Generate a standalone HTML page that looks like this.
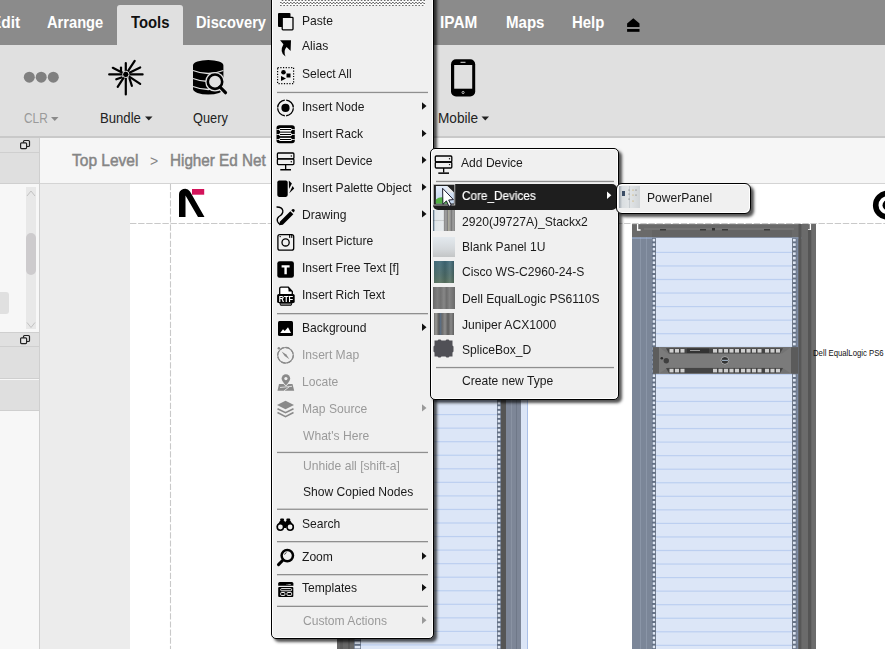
<!DOCTYPE html><html><head><meta charset="utf-8"><style>
*{margin:0;padding:0;box-sizing:border-box}
html,body{width:885px;height:649px;overflow:hidden;background:#fff}
body{position:relative;font-family:"Liberation Sans",sans-serif}
.g{will-change:transform}
.t{position:absolute;white-space:nowrap;line-height:1;font-family:"Liberation Sans",sans-serif}
svg{position:absolute;left:0;top:0;overflow:visible}
</style></head><body><div style="position:absolute;left:0px;top:0px;width:885px;height:45px;background:#8b8b8b"></div>
<div style="position:absolute;left:117px;top:5px;width:66px;height:40px;background:#e0e0e0;border-radius:3px 3px 0 0"></div>
<div class="t" style="left:-9.5px;top:14.0px;font-size:16.5px;color:#fff;font-weight:bold;transform:scaleX(0.9370);transform-origin:0 0;">Edit</div>
<div class="t" style="left:46.8px;top:14.0px;font-size:16.5px;color:#fff;font-weight:bold;transform:scaleX(0.8883);transform-origin:0 0;">Arrange</div>
<div class="t" style="left:130.5px;top:14.0px;font-size:16.5px;color:#111;font-weight:bold;transform:scaleX(0.9001);transform-origin:0 0;">Tools</div>
<div class="t" style="left:196px;top:14.0px;font-size:16.5px;color:#fff;font-weight:bold;transform:scaleX(0.8874);transform-origin:0 0;">Discovery</div>
<div class="t" style="left:440.4px;top:14.0px;font-size:16.5px;color:#fff;font-weight:bold;transform:scaleX(0.9319);transform-origin:0 0;">IPAM</div>
<div class="t" style="left:505.8px;top:14.0px;font-size:16.5px;color:#fff;font-weight:bold;transform:scaleX(0.9128);transform-origin:0 0;">Maps</div>
<div class="t" style="left:571.7px;top:14.0px;font-size:16.5px;color:#fff;font-weight:bold;transform:scaleX(0.9034);transform-origin:0 0;">Help</div>
<svg width="885" height="649"><path d="M627.1 23.4 L633.3 18.3 L639.5 23.4 V26.9 H627.1 Z" fill="#000"/><rect x="627.1" y="29" width="12.4" height="2.8" fill="#000"/></svg>
<div style="position:absolute;left:0px;top:45px;width:885px;height:92px;background:#e0e0e0"></div>
<div style="position:absolute;left:0px;top:136px;width:885px;height:1.5px;background:#c9c9c9"></div>
<div class="t" style="left:24.2px;top:110.8px;font-size:14.2px;color:#9a9a9a;font-weight:normal;transform:scaleX(0.8343);transform-origin:0 0;">CLR</div>
<div class="t" style="left:99.7px;top:110.7px;font-size:14.2px;color:#222;font-weight:normal;transform:scaleX(0.9250);transform-origin:0 0;">Bundle</div>
<div class="t" style="left:192.8px;top:110.7px;font-size:14.2px;color:#222;font-weight:normal;transform:scaleX(0.8999);transform-origin:0 0;">Query</div>
<div class="t" style="left:437.6px;top:110.7px;font-size:14.2px;color:#222;font-weight:normal;transform:scaleX(0.9610);transform-origin:0 0;">Mobile</div>
<svg width="885" height="649"><path d="M51 117 h7.5 l-3.75 4 z" fill="#8a8a8a"/><path d="M145 116.5 h7.5 l-3.75 4 z" fill="#222"/><path d="M481.5 116.5 h7.5 l-3.75 4 z" fill="#222"/><circle cx="29.3" cy="77.2" r="5.5" fill="#808080"/><circle cx="41.2" cy="77.2" r="5.5" fill="#808080"/><circle cx="53.3" cy="77.2" r="5.5" fill="#808080"/><line x1="125.8" y1="74.4" x2="125.8" y2="63" stroke="#000" stroke-width="2.2" stroke-linecap="round"/><line x1="125.8" y1="74.4" x2="125.8" y2="94.5" stroke="#000" stroke-width="2.2" stroke-linecap="round"/><line x1="125.8" y1="74.4" x2="109.2" y2="74.4" stroke="#000" stroke-width="2.2" stroke-linecap="round"/><line x1="125.8" y1="74.4" x2="142.6" y2="74.4" stroke="#000" stroke-width="2.2" stroke-linecap="round"/><line x1="125.8" y1="74.4" x2="134.7" y2="60.9" stroke="#000" stroke-width="2.2" stroke-linecap="round"/><line x1="125.8" y1="74.4" x2="112.8" y2="67.8" stroke="#000" stroke-width="2.2" stroke-linecap="round"/><line x1="125.8" y1="74.4" x2="140.2" y2="67.5" stroke="#000" stroke-width="2.2" stroke-linecap="round"/><line x1="125.8" y1="74.4" x2="140.2" y2="83.8" stroke="#000" stroke-width="2.2" stroke-linecap="round"/><line x1="125.8" y1="74.4" x2="117.7" y2="86.9" stroke="#000" stroke-width="2.2" stroke-linecap="round"/><line x1="121" y1="71" x2="121" y2="67.5" stroke="#000" stroke-width="2.2" stroke-linecap="round"/><line x1="121.5" y1="77.5" x2="116.3" y2="79.3" stroke="#000" stroke-width="2.2" stroke-linecap="round"/><line x1="129.5" y1="78.5" x2="131.9" y2="85.9" stroke="#000" stroke-width="2.2" stroke-linecap="round"/><circle cx="125.8" cy="74.4" r="3.2" fill="#000" stroke="#e0e0e0" stroke-width="1"/><path d="M193 65.5 a15.2 5.5 0 0 1 30.4 0 v23.5 a15.2 5.5 0 0 1 -30.4 0 z" fill="#000"/><path d="M193 70.5 q15.2 6 30.4 0" stroke="#e0e0e0" stroke-width="1.3" fill="none"/><path d="M193 78.5 q15.2 6 30.4 0" stroke="#e0e0e0" stroke-width="1.3" fill="none"/><path d="M193 86.5 q15.2 6 30.4 0" stroke="#e0e0e0" stroke-width="1.3" fill="none"/><circle cx="215" cy="81.7" r="9.8" fill="#e0e0e0"/><line x1="219" y1="86" x2="226" y2="93.2" stroke="#e0e0e0" stroke-width="5.5" stroke-linecap="round"/><circle cx="215" cy="81.7" r="7.2" fill="#e0e0e0" stroke="#000" stroke-width="2.6"/><line x1="220" y1="87" x2="225.5" y2="92.7" stroke="#000" stroke-width="3.2" stroke-linecap="round"/><rect x="451" y="59.3" width="24.2" height="37.2" rx="5" fill="#000"/><rect x="454.2" y="65" width="18" height="23.7" fill="#e0e0e0"/><circle cx="463.1" cy="92.5" r="1.1" fill="none" stroke="#e0e0e0" stroke-width="0.8"/><rect x="460.5" y="61.8" width="5" height="1" fill="#e0e0e0"/></svg>
<div style="position:absolute;left:0px;top:137.5px;width:39px;height:512px;background:#f7f7f7"></div>
<div style="position:absolute;left:0px;top:137.5px;width:39px;height:15px;background:#e0e0e0"></div>
<div style="position:absolute;left:0px;top:152px;width:39px;height:1.2px;background:#cfcfcf"></div>
<div style="position:absolute;left:0px;top:153px;width:39px;height:30px;background:#dfdfdf"></div>
<div style="position:absolute;left:0px;top:183px;width:39px;height:1.2px;background:#cfcfcf"></div>
<div style="position:absolute;left:26px;top:187px;width:10px;height:142px;background:#e8e8e8"></div>
<div style="position:absolute;left:26px;top:233px;width:10px;height:42px;background:#cdcbcd;border-radius:5px 5px 5px 5px"></div>
<div style="position:absolute;left:0px;top:291.5px;width:8.6px;height:22px;background:#e0e0e0;border-radius:0 3px 3px 0"></div>
<div style="position:absolute;left:0px;top:332px;width:39px;height:1.2px;background:#cfcfcf"></div>
<div style="position:absolute;left:0px;top:333px;width:39px;height:13.5px;background:#e0e0e0"></div>
<div style="position:absolute;left:0px;top:346px;width:39px;height:1.2px;background:#cfcfcf"></div>
<div style="position:absolute;left:0px;top:347px;width:39px;height:31.5px;background:#dfdfdf"></div>
<div style="position:absolute;left:0px;top:378.3px;width:39px;height:1.2px;background:#cfcfcf"></div>
<div style="position:absolute;left:0px;top:379.5px;width:39px;height:30px;background:#dfdfdf"></div>
<div style="position:absolute;left:0px;top:409.5px;width:39px;height:1.2px;background:#cfcfcf"></div>
<div style="position:absolute;left:38.8px;top:137.5px;width:1.5px;height:512px;background:#cfcfcf"></div>
<svg width="885" height="649"><path d="M27 196 L31 191 L35 196" stroke="#c2c2c2" stroke-width="1" fill="none"/><path d="M27 322.5 L31 327.5 L35 322.5" stroke="#c2c2c2" stroke-width="1" fill="none"/><rect x="23.5" y="140.5" width="6" height="6" rx="1" fill="none" stroke="#222" stroke-width="1.2"/><rect x="20.6" y="142.8" width="6" height="5.8" rx="1" fill="#e6e6e6" stroke="#222" stroke-width="1.2"/><rect x="23.5" y="335.5" width="6" height="6" rx="1" fill="none" stroke="#222" stroke-width="1.2"/><rect x="20.6" y="337.8" width="6" height="5.8" rx="1" fill="#e6e6e6" stroke="#222" stroke-width="1.2"/></svg>
<div style="position:absolute;left:40px;top:137.5px;width:845px;height:45.5px;background:#f6f6f6"></div>
<div style="position:absolute;left:40px;top:182.5px;width:845px;height:1.5px;background:#d4d4d4"></div>
<div class="t" style="left:71.6px;top:152.0px;font-size:16.5px;color:#858585;font-weight:normal;transform:scaleX(0.9401);transform-origin:0 0;-webkit-text-stroke:0.5px #858585;">Top Level</div>
<div class="t" style="left:150px;top:154.1px;font-size:14px;color:#858585;font-weight:normal;">&gt;</div>
<div class="t" style="left:169.8px;top:152.0px;font-size:16.5px;color:#858585;font-weight:normal;transform:scaleX(0.9235);transform-origin:0 0;-webkit-text-stroke:0.5px #858585;">Higher Ed Net</div>
<div style="position:absolute;left:40px;top:184px;width:90px;height:465px;background:#ececec"></div>
<svg width="885" height="649"><line x1="170.5" y1="184" x2="170.5" y2="649" stroke="#c9c9c9" stroke-width="1.1" stroke-dasharray="6.2 1.9"/><line x1="130" y1="223.5" x2="885" y2="223.5" stroke="#c9c9c9" stroke-width="1.1" stroke-dasharray="6.4 1.7"/><path d="M179 217 V195 a6 6 0 0 1 11 -3.5 L204.5 217 h-6.5 L185.5 195.5 V217 z" fill="#000"/><rect x="192" y="189" width="12.2" height="5.7" fill="#d3135a"/><circle cx="887.5" cy="205.2" r="11.8" fill="none" stroke="#000" stroke-width="5.6"/><circle cx="887.5" cy="205.2" r="5" fill="#000"/></svg>
<svg width="885" height="649"><rect x="337" y="184" width="191" height="465" fill="#686868"/><rect x="340" y="184" width="3" height="465" fill="#5e5e5e"/><rect x="348" y="184" width="2" height="465" fill="#5b5b5b"/><rect x="361" y="184" width="136" height="465" fill="#dce6f7"/><rect x="354" y="184" width="7" height="465" fill="#637085"/><rect x="354.7" y="184.80" width="5.6" height="2.6" fill="#dde5f2"/><rect x="354.7" y="189.32" width="5.6" height="2.6" fill="#dde5f2"/><rect x="354.7" y="193.84" width="5.6" height="2.6" fill="#dde5f2"/><rect x="354.7" y="198.36" width="5.6" height="2.6" fill="#dde5f2"/><rect x="354.7" y="202.88" width="5.6" height="2.6" fill="#dde5f2"/><rect x="354.7" y="207.40" width="5.6" height="2.6" fill="#dde5f2"/><rect x="354.7" y="211.92" width="5.6" height="2.6" fill="#dde5f2"/><rect x="354.7" y="216.44" width="5.6" height="2.6" fill="#dde5f2"/><rect x="354.7" y="220.96" width="5.6" height="2.6" fill="#dde5f2"/><rect x="354.7" y="225.48" width="5.6" height="2.6" fill="#dde5f2"/><rect x="354.7" y="230.00" width="5.6" height="2.6" fill="#dde5f2"/><rect x="354.7" y="234.52" width="5.6" height="2.6" fill="#dde5f2"/><rect x="354.7" y="239.04" width="5.6" height="2.6" fill="#dde5f2"/><rect x="354.7" y="243.56" width="5.6" height="2.6" fill="#dde5f2"/><rect x="354.7" y="248.08" width="5.6" height="2.6" fill="#dde5f2"/><rect x="354.7" y="252.60" width="5.6" height="2.6" fill="#dde5f2"/><rect x="354.7" y="257.12" width="5.6" height="2.6" fill="#dde5f2"/><rect x="354.7" y="261.64" width="5.6" height="2.6" fill="#dde5f2"/><rect x="354.7" y="266.16" width="5.6" height="2.6" fill="#dde5f2"/><rect x="354.7" y="270.68" width="5.6" height="2.6" fill="#dde5f2"/><rect x="354.7" y="275.20" width="5.6" height="2.6" fill="#dde5f2"/><rect x="354.7" y="279.72" width="5.6" height="2.6" fill="#dde5f2"/><rect x="354.7" y="284.24" width="5.6" height="2.6" fill="#dde5f2"/><rect x="354.7" y="288.76" width="5.6" height="2.6" fill="#dde5f2"/><rect x="354.7" y="293.28" width="5.6" height="2.6" fill="#dde5f2"/><rect x="354.7" y="297.80" width="5.6" height="2.6" fill="#dde5f2"/><rect x="354.7" y="302.32" width="5.6" height="2.6" fill="#dde5f2"/><rect x="354.7" y="306.84" width="5.6" height="2.6" fill="#dde5f2"/><rect x="354.7" y="311.36" width="5.6" height="2.6" fill="#dde5f2"/><rect x="354.7" y="315.88" width="5.6" height="2.6" fill="#dde5f2"/><rect x="354.7" y="320.40" width="5.6" height="2.6" fill="#dde5f2"/><rect x="354.7" y="324.92" width="5.6" height="2.6" fill="#dde5f2"/><rect x="354.7" y="329.44" width="5.6" height="2.6" fill="#dde5f2"/><rect x="354.7" y="333.96" width="5.6" height="2.6" fill="#dde5f2"/><rect x="354.7" y="338.48" width="5.6" height="2.6" fill="#dde5f2"/><rect x="354.7" y="343.00" width="5.6" height="2.6" fill="#dde5f2"/><rect x="354.7" y="347.52" width="5.6" height="2.6" fill="#dde5f2"/><rect x="354.7" y="352.04" width="5.6" height="2.6" fill="#dde5f2"/><rect x="354.7" y="356.56" width="5.6" height="2.6" fill="#dde5f2"/><rect x="354.7" y="361.08" width="5.6" height="2.6" fill="#dde5f2"/><rect x="354.7" y="365.60" width="5.6" height="2.6" fill="#dde5f2"/><rect x="354.7" y="370.12" width="5.6" height="2.6" fill="#dde5f2"/><rect x="354.7" y="374.64" width="5.6" height="2.6" fill="#dde5f2"/><rect x="354.7" y="379.16" width="5.6" height="2.6" fill="#dde5f2"/><rect x="354.7" y="383.68" width="5.6" height="2.6" fill="#dde5f2"/><rect x="354.7" y="388.20" width="5.6" height="2.6" fill="#dde5f2"/><rect x="354.7" y="392.72" width="5.6" height="2.6" fill="#dde5f2"/><rect x="354.7" y="397.24" width="5.6" height="2.6" fill="#dde5f2"/><rect x="354.7" y="401.76" width="5.6" height="2.6" fill="#dde5f2"/><rect x="354.7" y="406.28" width="5.6" height="2.6" fill="#dde5f2"/><rect x="354.7" y="410.80" width="5.6" height="2.6" fill="#dde5f2"/><rect x="354.7" y="415.32" width="5.6" height="2.6" fill="#dde5f2"/><rect x="354.7" y="419.84" width="5.6" height="2.6" fill="#dde5f2"/><rect x="354.7" y="424.36" width="5.6" height="2.6" fill="#dde5f2"/><rect x="354.7" y="428.88" width="5.6" height="2.6" fill="#dde5f2"/><rect x="354.7" y="433.40" width="5.6" height="2.6" fill="#dde5f2"/><rect x="354.7" y="437.92" width="5.6" height="2.6" fill="#dde5f2"/><rect x="354.7" y="442.44" width="5.6" height="2.6" fill="#dde5f2"/><rect x="354.7" y="446.96" width="5.6" height="2.6" fill="#dde5f2"/><rect x="354.7" y="451.48" width="5.6" height="2.6" fill="#dde5f2"/><rect x="354.7" y="456.00" width="5.6" height="2.6" fill="#dde5f2"/><rect x="354.7" y="460.52" width="5.6" height="2.6" fill="#dde5f2"/><rect x="354.7" y="465.04" width="5.6" height="2.6" fill="#dde5f2"/><rect x="354.7" y="469.56" width="5.6" height="2.6" fill="#dde5f2"/><rect x="354.7" y="474.08" width="5.6" height="2.6" fill="#dde5f2"/><rect x="354.7" y="478.60" width="5.6" height="2.6" fill="#dde5f2"/><rect x="354.7" y="483.12" width="5.6" height="2.6" fill="#dde5f2"/><rect x="354.7" y="487.64" width="5.6" height="2.6" fill="#dde5f2"/><rect x="354.7" y="492.16" width="5.6" height="2.6" fill="#dde5f2"/><rect x="354.7" y="496.68" width="5.6" height="2.6" fill="#dde5f2"/><rect x="354.7" y="501.20" width="5.6" height="2.6" fill="#dde5f2"/><rect x="354.7" y="505.72" width="5.6" height="2.6" fill="#dde5f2"/><rect x="354.7" y="510.24" width="5.6" height="2.6" fill="#dde5f2"/><rect x="354.7" y="514.76" width="5.6" height="2.6" fill="#dde5f2"/><rect x="354.7" y="519.28" width="5.6" height="2.6" fill="#dde5f2"/><rect x="354.7" y="523.80" width="5.6" height="2.6" fill="#dde5f2"/><rect x="354.7" y="528.32" width="5.6" height="2.6" fill="#dde5f2"/><rect x="354.7" y="532.84" width="5.6" height="2.6" fill="#dde5f2"/><rect x="354.7" y="537.36" width="5.6" height="2.6" fill="#dde5f2"/><rect x="354.7" y="541.88" width="5.6" height="2.6" fill="#dde5f2"/><rect x="354.7" y="546.40" width="5.6" height="2.6" fill="#dde5f2"/><rect x="354.7" y="550.92" width="5.6" height="2.6" fill="#dde5f2"/><rect x="354.7" y="555.44" width="5.6" height="2.6" fill="#dde5f2"/><rect x="354.7" y="559.96" width="5.6" height="2.6" fill="#dde5f2"/><rect x="354.7" y="564.48" width="5.6" height="2.6" fill="#dde5f2"/><rect x="354.7" y="569.00" width="5.6" height="2.6" fill="#dde5f2"/><rect x="354.7" y="573.52" width="5.6" height="2.6" fill="#dde5f2"/><rect x="354.7" y="578.04" width="5.6" height="2.6" fill="#dde5f2"/><rect x="354.7" y="582.56" width="5.6" height="2.6" fill="#dde5f2"/><rect x="354.7" y="587.08" width="5.6" height="2.6" fill="#dde5f2"/><rect x="354.7" y="591.60" width="5.6" height="2.6" fill="#dde5f2"/><rect x="354.7" y="596.12" width="5.6" height="2.6" fill="#dde5f2"/><rect x="354.7" y="600.64" width="5.6" height="2.6" fill="#dde5f2"/><rect x="354.7" y="605.16" width="5.6" height="2.6" fill="#dde5f2"/><rect x="354.7" y="609.68" width="5.6" height="2.6" fill="#dde5f2"/><rect x="354.7" y="614.20" width="5.6" height="2.6" fill="#dde5f2"/><rect x="354.7" y="618.72" width="5.6" height="2.6" fill="#dde5f2"/><rect x="354.7" y="623.24" width="5.6" height="2.6" fill="#dde5f2"/><rect x="354.7" y="627.76" width="5.6" height="2.6" fill="#dde5f2"/><rect x="354.7" y="632.28" width="5.6" height="2.6" fill="#dde5f2"/><rect x="354.7" y="636.80" width="5.6" height="2.6" fill="#dde5f2"/><rect x="354.7" y="641.32" width="5.6" height="2.6" fill="#dde5f2"/><rect x="354.7" y="645.84" width="5.6" height="2.6" fill="#dde5f2"/><rect x="497" y="184" width="4" height="465" fill="#637085"/><rect x="497.7" y="184.80" width="2.6" height="2.6" fill="#dde5f2"/><rect x="497.7" y="189.32" width="2.6" height="2.6" fill="#dde5f2"/><rect x="497.7" y="193.84" width="2.6" height="2.6" fill="#dde5f2"/><rect x="497.7" y="198.36" width="2.6" height="2.6" fill="#dde5f2"/><rect x="497.7" y="202.88" width="2.6" height="2.6" fill="#dde5f2"/><rect x="497.7" y="207.40" width="2.6" height="2.6" fill="#dde5f2"/><rect x="497.7" y="211.92" width="2.6" height="2.6" fill="#dde5f2"/><rect x="497.7" y="216.44" width="2.6" height="2.6" fill="#dde5f2"/><rect x="497.7" y="220.96" width="2.6" height="2.6" fill="#dde5f2"/><rect x="497.7" y="225.48" width="2.6" height="2.6" fill="#dde5f2"/><rect x="497.7" y="230.00" width="2.6" height="2.6" fill="#dde5f2"/><rect x="497.7" y="234.52" width="2.6" height="2.6" fill="#dde5f2"/><rect x="497.7" y="239.04" width="2.6" height="2.6" fill="#dde5f2"/><rect x="497.7" y="243.56" width="2.6" height="2.6" fill="#dde5f2"/><rect x="497.7" y="248.08" width="2.6" height="2.6" fill="#dde5f2"/><rect x="497.7" y="252.60" width="2.6" height="2.6" fill="#dde5f2"/><rect x="497.7" y="257.12" width="2.6" height="2.6" fill="#dde5f2"/><rect x="497.7" y="261.64" width="2.6" height="2.6" fill="#dde5f2"/><rect x="497.7" y="266.16" width="2.6" height="2.6" fill="#dde5f2"/><rect x="497.7" y="270.68" width="2.6" height="2.6" fill="#dde5f2"/><rect x="497.7" y="275.20" width="2.6" height="2.6" fill="#dde5f2"/><rect x="497.7" y="279.72" width="2.6" height="2.6" fill="#dde5f2"/><rect x="497.7" y="284.24" width="2.6" height="2.6" fill="#dde5f2"/><rect x="497.7" y="288.76" width="2.6" height="2.6" fill="#dde5f2"/><rect x="497.7" y="293.28" width="2.6" height="2.6" fill="#dde5f2"/><rect x="497.7" y="297.80" width="2.6" height="2.6" fill="#dde5f2"/><rect x="497.7" y="302.32" width="2.6" height="2.6" fill="#dde5f2"/><rect x="497.7" y="306.84" width="2.6" height="2.6" fill="#dde5f2"/><rect x="497.7" y="311.36" width="2.6" height="2.6" fill="#dde5f2"/><rect x="497.7" y="315.88" width="2.6" height="2.6" fill="#dde5f2"/><rect x="497.7" y="320.40" width="2.6" height="2.6" fill="#dde5f2"/><rect x="497.7" y="324.92" width="2.6" height="2.6" fill="#dde5f2"/><rect x="497.7" y="329.44" width="2.6" height="2.6" fill="#dde5f2"/><rect x="497.7" y="333.96" width="2.6" height="2.6" fill="#dde5f2"/><rect x="497.7" y="338.48" width="2.6" height="2.6" fill="#dde5f2"/><rect x="497.7" y="343.00" width="2.6" height="2.6" fill="#dde5f2"/><rect x="497.7" y="347.52" width="2.6" height="2.6" fill="#dde5f2"/><rect x="497.7" y="352.04" width="2.6" height="2.6" fill="#dde5f2"/><rect x="497.7" y="356.56" width="2.6" height="2.6" fill="#dde5f2"/><rect x="497.7" y="361.08" width="2.6" height="2.6" fill="#dde5f2"/><rect x="497.7" y="365.60" width="2.6" height="2.6" fill="#dde5f2"/><rect x="497.7" y="370.12" width="2.6" height="2.6" fill="#dde5f2"/><rect x="497.7" y="374.64" width="2.6" height="2.6" fill="#dde5f2"/><rect x="497.7" y="379.16" width="2.6" height="2.6" fill="#dde5f2"/><rect x="497.7" y="383.68" width="2.6" height="2.6" fill="#dde5f2"/><rect x="497.7" y="388.20" width="2.6" height="2.6" fill="#dde5f2"/><rect x="497.7" y="392.72" width="2.6" height="2.6" fill="#dde5f2"/><rect x="497.7" y="397.24" width="2.6" height="2.6" fill="#dde5f2"/><rect x="497.7" y="401.76" width="2.6" height="2.6" fill="#dde5f2"/><rect x="497.7" y="406.28" width="2.6" height="2.6" fill="#dde5f2"/><rect x="497.7" y="410.80" width="2.6" height="2.6" fill="#dde5f2"/><rect x="497.7" y="415.32" width="2.6" height="2.6" fill="#dde5f2"/><rect x="497.7" y="419.84" width="2.6" height="2.6" fill="#dde5f2"/><rect x="497.7" y="424.36" width="2.6" height="2.6" fill="#dde5f2"/><rect x="497.7" y="428.88" width="2.6" height="2.6" fill="#dde5f2"/><rect x="497.7" y="433.40" width="2.6" height="2.6" fill="#dde5f2"/><rect x="497.7" y="437.92" width="2.6" height="2.6" fill="#dde5f2"/><rect x="497.7" y="442.44" width="2.6" height="2.6" fill="#dde5f2"/><rect x="497.7" y="446.96" width="2.6" height="2.6" fill="#dde5f2"/><rect x="497.7" y="451.48" width="2.6" height="2.6" fill="#dde5f2"/><rect x="497.7" y="456.00" width="2.6" height="2.6" fill="#dde5f2"/><rect x="497.7" y="460.52" width="2.6" height="2.6" fill="#dde5f2"/><rect x="497.7" y="465.04" width="2.6" height="2.6" fill="#dde5f2"/><rect x="497.7" y="469.56" width="2.6" height="2.6" fill="#dde5f2"/><rect x="497.7" y="474.08" width="2.6" height="2.6" fill="#dde5f2"/><rect x="497.7" y="478.60" width="2.6" height="2.6" fill="#dde5f2"/><rect x="497.7" y="483.12" width="2.6" height="2.6" fill="#dde5f2"/><rect x="497.7" y="487.64" width="2.6" height="2.6" fill="#dde5f2"/><rect x="497.7" y="492.16" width="2.6" height="2.6" fill="#dde5f2"/><rect x="497.7" y="496.68" width="2.6" height="2.6" fill="#dde5f2"/><rect x="497.7" y="501.20" width="2.6" height="2.6" fill="#dde5f2"/><rect x="497.7" y="505.72" width="2.6" height="2.6" fill="#dde5f2"/><rect x="497.7" y="510.24" width="2.6" height="2.6" fill="#dde5f2"/><rect x="497.7" y="514.76" width="2.6" height="2.6" fill="#dde5f2"/><rect x="497.7" y="519.28" width="2.6" height="2.6" fill="#dde5f2"/><rect x="497.7" y="523.80" width="2.6" height="2.6" fill="#dde5f2"/><rect x="497.7" y="528.32" width="2.6" height="2.6" fill="#dde5f2"/><rect x="497.7" y="532.84" width="2.6" height="2.6" fill="#dde5f2"/><rect x="497.7" y="537.36" width="2.6" height="2.6" fill="#dde5f2"/><rect x="497.7" y="541.88" width="2.6" height="2.6" fill="#dde5f2"/><rect x="497.7" y="546.40" width="2.6" height="2.6" fill="#dde5f2"/><rect x="497.7" y="550.92" width="2.6" height="2.6" fill="#dde5f2"/><rect x="497.7" y="555.44" width="2.6" height="2.6" fill="#dde5f2"/><rect x="497.7" y="559.96" width="2.6" height="2.6" fill="#dde5f2"/><rect x="497.7" y="564.48" width="2.6" height="2.6" fill="#dde5f2"/><rect x="497.7" y="569.00" width="2.6" height="2.6" fill="#dde5f2"/><rect x="497.7" y="573.52" width="2.6" height="2.6" fill="#dde5f2"/><rect x="497.7" y="578.04" width="2.6" height="2.6" fill="#dde5f2"/><rect x="497.7" y="582.56" width="2.6" height="2.6" fill="#dde5f2"/><rect x="497.7" y="587.08" width="2.6" height="2.6" fill="#dde5f2"/><rect x="497.7" y="591.60" width="2.6" height="2.6" fill="#dde5f2"/><rect x="497.7" y="596.12" width="2.6" height="2.6" fill="#dde5f2"/><rect x="497.7" y="600.64" width="2.6" height="2.6" fill="#dde5f2"/><rect x="497.7" y="605.16" width="2.6" height="2.6" fill="#dde5f2"/><rect x="497.7" y="609.68" width="2.6" height="2.6" fill="#dde5f2"/><rect x="497.7" y="614.20" width="2.6" height="2.6" fill="#dde5f2"/><rect x="497.7" y="618.72" width="2.6" height="2.6" fill="#dde5f2"/><rect x="497.7" y="623.24" width="2.6" height="2.6" fill="#dde5f2"/><rect x="497.7" y="627.76" width="2.6" height="2.6" fill="#dde5f2"/><rect x="497.7" y="632.28" width="2.6" height="2.6" fill="#dde5f2"/><rect x="497.7" y="636.80" width="2.6" height="2.6" fill="#dde5f2"/><rect x="497.7" y="641.32" width="2.6" height="2.6" fill="#dde5f2"/><rect x="497.7" y="645.84" width="2.6" height="2.6" fill="#dde5f2"/><rect x="501" y="184" width="5" height="465" fill="#555"/><rect x="506" y="184" width="15" height="465" fill="#7d8697"/><rect x="511" y="184" width="1" height="465" fill="#8a93a3"/><rect x="516" y="184" width="1" height="465" fill="#6f7888"/><rect x="521" y="184" width="6.5" height="465" fill="#dbe5f6"/><rect x="527" y="184" width="1" height="465" fill="#aac0e8"/><rect x="361" y="183.65" width="136" height="1.2" fill="#bccff0"/><rect x="361" y="197.20" width="136" height="1.2" fill="#bccff0"/><rect x="361" y="210.75" width="136" height="1.2" fill="#bccff0"/><rect x="361" y="224.30" width="136" height="1.2" fill="#bccff0"/><rect x="361" y="237.85" width="136" height="1.2" fill="#bccff0"/><rect x="361" y="251.40" width="136" height="1.2" fill="#bccff0"/><rect x="361" y="264.95" width="136" height="1.2" fill="#bccff0"/><rect x="361" y="278.50" width="136" height="1.2" fill="#bccff0"/><rect x="361" y="292.05" width="136" height="1.2" fill="#bccff0"/><rect x="361" y="305.60" width="136" height="1.2" fill="#bccff0"/><rect x="361" y="319.15" width="136" height="1.2" fill="#bccff0"/><rect x="361" y="332.70" width="136" height="1.2" fill="#bccff0"/><rect x="361" y="346.25" width="136" height="1.2" fill="#bccff0"/><rect x="361" y="359.80" width="136" height="1.2" fill="#bccff0"/><rect x="361" y="373.35" width="136" height="1.2" fill="#bccff0"/><rect x="361" y="386.90" width="136" height="1.2" fill="#bccff0"/><rect x="361" y="400.45" width="136" height="1.2" fill="#bccff0"/><rect x="361" y="414.00" width="136" height="1.2" fill="#bccff0"/><rect x="361" y="427.55" width="136" height="1.2" fill="#bccff0"/><rect x="361" y="441.10" width="136" height="1.2" fill="#bccff0"/><rect x="361" y="454.65" width="136" height="1.2" fill="#bccff0"/><rect x="361" y="468.20" width="136" height="1.2" fill="#bccff0"/><rect x="361" y="481.75" width="136" height="1.2" fill="#bccff0"/><rect x="361" y="495.30" width="136" height="1.2" fill="#bccff0"/><rect x="361" y="508.85" width="136" height="1.2" fill="#bccff0"/><rect x="361" y="522.40" width="136" height="1.2" fill="#bccff0"/><rect x="361" y="535.95" width="136" height="1.2" fill="#bccff0"/><rect x="361" y="549.50" width="136" height="1.2" fill="#bccff0"/><rect x="361" y="563.05" width="136" height="1.2" fill="#bccff0"/><rect x="361" y="576.60" width="136" height="1.2" fill="#bccff0"/><rect x="361" y="590.15" width="136" height="1.2" fill="#bccff0"/><rect x="361" y="603.70" width="136" height="1.2" fill="#bccff0"/><rect x="361" y="617.25" width="136" height="1.2" fill="#bccff0"/><rect x="361" y="630.80" width="136" height="1.2" fill="#bccff0"/><rect x="361" y="644.35" width="136" height="1.2" fill="#bccff0"/><rect x="632" y="224" width="184" height="425" fill="#6a6a6a"/><rect x="632" y="224" width="184" height="1" fill="#7a7a7a"/><rect x="644" y="228.5" width="150" height="1" fill="#7d7d7d"/><rect x="652" y="230" width="140" height="7.5" fill="#646464"/><rect x="660" y="229" width="6" height="1.5" fill="#3a3a3a"/><rect x="700" y="229" width="6" height="1.5" fill="#3a3a3a"/><rect x="712" y="228" width="3" height="2.5" fill="#333"/><rect x="722" y="229" width="6" height="1.5" fill="#3a3a3a"/><rect x="764" y="229" width="6" height="1.5" fill="#3a3a3a"/><path d="M637.6 224 v6 h3" fill="none" stroke="#fff" stroke-width="1.3"/><path d="M810.4 224 v6 h-3" fill="none" stroke="#fff" stroke-width="1.3"/><rect x="632" y="237.5" width="20" height="411.5" fill="#7b8698"/><rect x="640" y="237.5" width="1" height="411.5" fill="#8a95a7"/><rect x="646" y="237.5" width="1" height="411.5" fill="#8a95a7"/><rect x="632" y="237.5" width="170" height="1" fill="#9fb5dc"/><rect x="655.8" y="238" width="136.5" height="411" fill="#dce6f7"/><rect x="652" y="238" width="3.8" height="411" fill="#637085"/><rect x="652.7" y="238.80" width="2.4" height="2.6" fill="#dde5f2"/><rect x="652.7" y="243.32" width="2.4" height="2.6" fill="#dde5f2"/><rect x="652.7" y="247.84" width="2.4" height="2.6" fill="#dde5f2"/><rect x="652.7" y="252.36" width="2.4" height="2.6" fill="#dde5f2"/><rect x="652.7" y="256.88" width="2.4" height="2.6" fill="#dde5f2"/><rect x="652.7" y="261.40" width="2.4" height="2.6" fill="#dde5f2"/><rect x="652.7" y="265.92" width="2.4" height="2.6" fill="#dde5f2"/><rect x="652.7" y="270.44" width="2.4" height="2.6" fill="#dde5f2"/><rect x="652.7" y="274.96" width="2.4" height="2.6" fill="#dde5f2"/><rect x="652.7" y="279.48" width="2.4" height="2.6" fill="#dde5f2"/><rect x="652.7" y="284.00" width="2.4" height="2.6" fill="#dde5f2"/><rect x="652.7" y="288.52" width="2.4" height="2.6" fill="#dde5f2"/><rect x="652.7" y="293.04" width="2.4" height="2.6" fill="#dde5f2"/><rect x="652.7" y="297.56" width="2.4" height="2.6" fill="#dde5f2"/><rect x="652.7" y="302.08" width="2.4" height="2.6" fill="#dde5f2"/><rect x="652.7" y="306.60" width="2.4" height="2.6" fill="#dde5f2"/><rect x="652.7" y="311.12" width="2.4" height="2.6" fill="#dde5f2"/><rect x="652.7" y="315.64" width="2.4" height="2.6" fill="#dde5f2"/><rect x="652.7" y="320.16" width="2.4" height="2.6" fill="#dde5f2"/><rect x="652.7" y="324.68" width="2.4" height="2.6" fill="#dde5f2"/><rect x="652.7" y="329.20" width="2.4" height="2.6" fill="#dde5f2"/><rect x="652.7" y="333.72" width="2.4" height="2.6" fill="#dde5f2"/><rect x="652.7" y="338.24" width="2.4" height="2.6" fill="#dde5f2"/><rect x="652.7" y="342.76" width="2.4" height="2.6" fill="#dde5f2"/><rect x="652.7" y="347.28" width="2.4" height="2.6" fill="#dde5f2"/><rect x="652.7" y="351.80" width="2.4" height="2.6" fill="#dde5f2"/><rect x="652.7" y="356.32" width="2.4" height="2.6" fill="#dde5f2"/><rect x="652.7" y="360.84" width="2.4" height="2.6" fill="#dde5f2"/><rect x="652.7" y="365.36" width="2.4" height="2.6" fill="#dde5f2"/><rect x="652.7" y="369.88" width="2.4" height="2.6" fill="#dde5f2"/><rect x="652.7" y="374.40" width="2.4" height="2.6" fill="#dde5f2"/><rect x="652.7" y="378.92" width="2.4" height="2.6" fill="#dde5f2"/><rect x="652.7" y="383.44" width="2.4" height="2.6" fill="#dde5f2"/><rect x="652.7" y="387.96" width="2.4" height="2.6" fill="#dde5f2"/><rect x="652.7" y="392.48" width="2.4" height="2.6" fill="#dde5f2"/><rect x="652.7" y="397.00" width="2.4" height="2.6" fill="#dde5f2"/><rect x="652.7" y="401.52" width="2.4" height="2.6" fill="#dde5f2"/><rect x="652.7" y="406.04" width="2.4" height="2.6" fill="#dde5f2"/><rect x="652.7" y="410.56" width="2.4" height="2.6" fill="#dde5f2"/><rect x="652.7" y="415.08" width="2.4" height="2.6" fill="#dde5f2"/><rect x="652.7" y="419.60" width="2.4" height="2.6" fill="#dde5f2"/><rect x="652.7" y="424.12" width="2.4" height="2.6" fill="#dde5f2"/><rect x="652.7" y="428.64" width="2.4" height="2.6" fill="#dde5f2"/><rect x="652.7" y="433.16" width="2.4" height="2.6" fill="#dde5f2"/><rect x="652.7" y="437.68" width="2.4" height="2.6" fill="#dde5f2"/><rect x="652.7" y="442.20" width="2.4" height="2.6" fill="#dde5f2"/><rect x="652.7" y="446.72" width="2.4" height="2.6" fill="#dde5f2"/><rect x="652.7" y="451.24" width="2.4" height="2.6" fill="#dde5f2"/><rect x="652.7" y="455.76" width="2.4" height="2.6" fill="#dde5f2"/><rect x="652.7" y="460.28" width="2.4" height="2.6" fill="#dde5f2"/><rect x="652.7" y="464.80" width="2.4" height="2.6" fill="#dde5f2"/><rect x="652.7" y="469.32" width="2.4" height="2.6" fill="#dde5f2"/><rect x="652.7" y="473.84" width="2.4" height="2.6" fill="#dde5f2"/><rect x="652.7" y="478.36" width="2.4" height="2.6" fill="#dde5f2"/><rect x="652.7" y="482.88" width="2.4" height="2.6" fill="#dde5f2"/><rect x="652.7" y="487.40" width="2.4" height="2.6" fill="#dde5f2"/><rect x="652.7" y="491.92" width="2.4" height="2.6" fill="#dde5f2"/><rect x="652.7" y="496.44" width="2.4" height="2.6" fill="#dde5f2"/><rect x="652.7" y="500.96" width="2.4" height="2.6" fill="#dde5f2"/><rect x="652.7" y="505.48" width="2.4" height="2.6" fill="#dde5f2"/><rect x="652.7" y="510.00" width="2.4" height="2.6" fill="#dde5f2"/><rect x="652.7" y="514.52" width="2.4" height="2.6" fill="#dde5f2"/><rect x="652.7" y="519.04" width="2.4" height="2.6" fill="#dde5f2"/><rect x="652.7" y="523.56" width="2.4" height="2.6" fill="#dde5f2"/><rect x="652.7" y="528.08" width="2.4" height="2.6" fill="#dde5f2"/><rect x="652.7" y="532.60" width="2.4" height="2.6" fill="#dde5f2"/><rect x="652.7" y="537.12" width="2.4" height="2.6" fill="#dde5f2"/><rect x="652.7" y="541.64" width="2.4" height="2.6" fill="#dde5f2"/><rect x="652.7" y="546.16" width="2.4" height="2.6" fill="#dde5f2"/><rect x="652.7" y="550.68" width="2.4" height="2.6" fill="#dde5f2"/><rect x="652.7" y="555.20" width="2.4" height="2.6" fill="#dde5f2"/><rect x="652.7" y="559.72" width="2.4" height="2.6" fill="#dde5f2"/><rect x="652.7" y="564.24" width="2.4" height="2.6" fill="#dde5f2"/><rect x="652.7" y="568.76" width="2.4" height="2.6" fill="#dde5f2"/><rect x="652.7" y="573.28" width="2.4" height="2.6" fill="#dde5f2"/><rect x="652.7" y="577.80" width="2.4" height="2.6" fill="#dde5f2"/><rect x="652.7" y="582.32" width="2.4" height="2.6" fill="#dde5f2"/><rect x="652.7" y="586.84" width="2.4" height="2.6" fill="#dde5f2"/><rect x="652.7" y="591.36" width="2.4" height="2.6" fill="#dde5f2"/><rect x="652.7" y="595.88" width="2.4" height="2.6" fill="#dde5f2"/><rect x="652.7" y="600.40" width="2.4" height="2.6" fill="#dde5f2"/><rect x="652.7" y="604.92" width="2.4" height="2.6" fill="#dde5f2"/><rect x="652.7" y="609.44" width="2.4" height="2.6" fill="#dde5f2"/><rect x="652.7" y="613.96" width="2.4" height="2.6" fill="#dde5f2"/><rect x="652.7" y="618.48" width="2.4" height="2.6" fill="#dde5f2"/><rect x="652.7" y="623.00" width="2.4" height="2.6" fill="#dde5f2"/><rect x="652.7" y="627.52" width="2.4" height="2.6" fill="#dde5f2"/><rect x="652.7" y="632.04" width="2.4" height="2.6" fill="#dde5f2"/><rect x="652.7" y="636.56" width="2.4" height="2.6" fill="#dde5f2"/><rect x="652.7" y="641.08" width="2.4" height="2.6" fill="#dde5f2"/><rect x="652.7" y="645.60" width="2.4" height="2.6" fill="#dde5f2"/><rect x="792.3" y="238" width="4.1" height="411" fill="#637085"/><rect x="793.0" y="238.80" width="2.6999999999999997" height="2.6" fill="#dde5f2"/><rect x="793.0" y="243.32" width="2.6999999999999997" height="2.6" fill="#dde5f2"/><rect x="793.0" y="247.84" width="2.6999999999999997" height="2.6" fill="#dde5f2"/><rect x="793.0" y="252.36" width="2.6999999999999997" height="2.6" fill="#dde5f2"/><rect x="793.0" y="256.88" width="2.6999999999999997" height="2.6" fill="#dde5f2"/><rect x="793.0" y="261.40" width="2.6999999999999997" height="2.6" fill="#dde5f2"/><rect x="793.0" y="265.92" width="2.6999999999999997" height="2.6" fill="#dde5f2"/><rect x="793.0" y="270.44" width="2.6999999999999997" height="2.6" fill="#dde5f2"/><rect x="793.0" y="274.96" width="2.6999999999999997" height="2.6" fill="#dde5f2"/><rect x="793.0" y="279.48" width="2.6999999999999997" height="2.6" fill="#dde5f2"/><rect x="793.0" y="284.00" width="2.6999999999999997" height="2.6" fill="#dde5f2"/><rect x="793.0" y="288.52" width="2.6999999999999997" height="2.6" fill="#dde5f2"/><rect x="793.0" y="293.04" width="2.6999999999999997" height="2.6" fill="#dde5f2"/><rect x="793.0" y="297.56" width="2.6999999999999997" height="2.6" fill="#dde5f2"/><rect x="793.0" y="302.08" width="2.6999999999999997" height="2.6" fill="#dde5f2"/><rect x="793.0" y="306.60" width="2.6999999999999997" height="2.6" fill="#dde5f2"/><rect x="793.0" y="311.12" width="2.6999999999999997" height="2.6" fill="#dde5f2"/><rect x="793.0" y="315.64" width="2.6999999999999997" height="2.6" fill="#dde5f2"/><rect x="793.0" y="320.16" width="2.6999999999999997" height="2.6" fill="#dde5f2"/><rect x="793.0" y="324.68" width="2.6999999999999997" height="2.6" fill="#dde5f2"/><rect x="793.0" y="329.20" width="2.6999999999999997" height="2.6" fill="#dde5f2"/><rect x="793.0" y="333.72" width="2.6999999999999997" height="2.6" fill="#dde5f2"/><rect x="793.0" y="338.24" width="2.6999999999999997" height="2.6" fill="#dde5f2"/><rect x="793.0" y="342.76" width="2.6999999999999997" height="2.6" fill="#dde5f2"/><rect x="793.0" y="347.28" width="2.6999999999999997" height="2.6" fill="#dde5f2"/><rect x="793.0" y="351.80" width="2.6999999999999997" height="2.6" fill="#dde5f2"/><rect x="793.0" y="356.32" width="2.6999999999999997" height="2.6" fill="#dde5f2"/><rect x="793.0" y="360.84" width="2.6999999999999997" height="2.6" fill="#dde5f2"/><rect x="793.0" y="365.36" width="2.6999999999999997" height="2.6" fill="#dde5f2"/><rect x="793.0" y="369.88" width="2.6999999999999997" height="2.6" fill="#dde5f2"/><rect x="793.0" y="374.40" width="2.6999999999999997" height="2.6" fill="#dde5f2"/><rect x="793.0" y="378.92" width="2.6999999999999997" height="2.6" fill="#dde5f2"/><rect x="793.0" y="383.44" width="2.6999999999999997" height="2.6" fill="#dde5f2"/><rect x="793.0" y="387.96" width="2.6999999999999997" height="2.6" fill="#dde5f2"/><rect x="793.0" y="392.48" width="2.6999999999999997" height="2.6" fill="#dde5f2"/><rect x="793.0" y="397.00" width="2.6999999999999997" height="2.6" fill="#dde5f2"/><rect x="793.0" y="401.52" width="2.6999999999999997" height="2.6" fill="#dde5f2"/><rect x="793.0" y="406.04" width="2.6999999999999997" height="2.6" fill="#dde5f2"/><rect x="793.0" y="410.56" width="2.6999999999999997" height="2.6" fill="#dde5f2"/><rect x="793.0" y="415.08" width="2.6999999999999997" height="2.6" fill="#dde5f2"/><rect x="793.0" y="419.60" width="2.6999999999999997" height="2.6" fill="#dde5f2"/><rect x="793.0" y="424.12" width="2.6999999999999997" height="2.6" fill="#dde5f2"/><rect x="793.0" y="428.64" width="2.6999999999999997" height="2.6" fill="#dde5f2"/><rect x="793.0" y="433.16" width="2.6999999999999997" height="2.6" fill="#dde5f2"/><rect x="793.0" y="437.68" width="2.6999999999999997" height="2.6" fill="#dde5f2"/><rect x="793.0" y="442.20" width="2.6999999999999997" height="2.6" fill="#dde5f2"/><rect x="793.0" y="446.72" width="2.6999999999999997" height="2.6" fill="#dde5f2"/><rect x="793.0" y="451.24" width="2.6999999999999997" height="2.6" fill="#dde5f2"/><rect x="793.0" y="455.76" width="2.6999999999999997" height="2.6" fill="#dde5f2"/><rect x="793.0" y="460.28" width="2.6999999999999997" height="2.6" fill="#dde5f2"/><rect x="793.0" y="464.80" width="2.6999999999999997" height="2.6" fill="#dde5f2"/><rect x="793.0" y="469.32" width="2.6999999999999997" height="2.6" fill="#dde5f2"/><rect x="793.0" y="473.84" width="2.6999999999999997" height="2.6" fill="#dde5f2"/><rect x="793.0" y="478.36" width="2.6999999999999997" height="2.6" fill="#dde5f2"/><rect x="793.0" y="482.88" width="2.6999999999999997" height="2.6" fill="#dde5f2"/><rect x="793.0" y="487.40" width="2.6999999999999997" height="2.6" fill="#dde5f2"/><rect x="793.0" y="491.92" width="2.6999999999999997" height="2.6" fill="#dde5f2"/><rect x="793.0" y="496.44" width="2.6999999999999997" height="2.6" fill="#dde5f2"/><rect x="793.0" y="500.96" width="2.6999999999999997" height="2.6" fill="#dde5f2"/><rect x="793.0" y="505.48" width="2.6999999999999997" height="2.6" fill="#dde5f2"/><rect x="793.0" y="510.00" width="2.6999999999999997" height="2.6" fill="#dde5f2"/><rect x="793.0" y="514.52" width="2.6999999999999997" height="2.6" fill="#dde5f2"/><rect x="793.0" y="519.04" width="2.6999999999999997" height="2.6" fill="#dde5f2"/><rect x="793.0" y="523.56" width="2.6999999999999997" height="2.6" fill="#dde5f2"/><rect x="793.0" y="528.08" width="2.6999999999999997" height="2.6" fill="#dde5f2"/><rect x="793.0" y="532.60" width="2.6999999999999997" height="2.6" fill="#dde5f2"/><rect x="793.0" y="537.12" width="2.6999999999999997" height="2.6" fill="#dde5f2"/><rect x="793.0" y="541.64" width="2.6999999999999997" height="2.6" fill="#dde5f2"/><rect x="793.0" y="546.16" width="2.6999999999999997" height="2.6" fill="#dde5f2"/><rect x="793.0" y="550.68" width="2.6999999999999997" height="2.6" fill="#dde5f2"/><rect x="793.0" y="555.20" width="2.6999999999999997" height="2.6" fill="#dde5f2"/><rect x="793.0" y="559.72" width="2.6999999999999997" height="2.6" fill="#dde5f2"/><rect x="793.0" y="564.24" width="2.6999999999999997" height="2.6" fill="#dde5f2"/><rect x="793.0" y="568.76" width="2.6999999999999997" height="2.6" fill="#dde5f2"/><rect x="793.0" y="573.28" width="2.6999999999999997" height="2.6" fill="#dde5f2"/><rect x="793.0" y="577.80" width="2.6999999999999997" height="2.6" fill="#dde5f2"/><rect x="793.0" y="582.32" width="2.6999999999999997" height="2.6" fill="#dde5f2"/><rect x="793.0" y="586.84" width="2.6999999999999997" height="2.6" fill="#dde5f2"/><rect x="793.0" y="591.36" width="2.6999999999999997" height="2.6" fill="#dde5f2"/><rect x="793.0" y="595.88" width="2.6999999999999997" height="2.6" fill="#dde5f2"/><rect x="793.0" y="600.40" width="2.6999999999999997" height="2.6" fill="#dde5f2"/><rect x="793.0" y="604.92" width="2.6999999999999997" height="2.6" fill="#dde5f2"/><rect x="793.0" y="609.44" width="2.6999999999999997" height="2.6" fill="#dde5f2"/><rect x="793.0" y="613.96" width="2.6999999999999997" height="2.6" fill="#dde5f2"/><rect x="793.0" y="618.48" width="2.6999999999999997" height="2.6" fill="#dde5f2"/><rect x="793.0" y="623.00" width="2.6999999999999997" height="2.6" fill="#dde5f2"/><rect x="793.0" y="627.52" width="2.6999999999999997" height="2.6" fill="#dde5f2"/><rect x="793.0" y="632.04" width="2.6999999999999997" height="2.6" fill="#dde5f2"/><rect x="793.0" y="636.56" width="2.6999999999999997" height="2.6" fill="#dde5f2"/><rect x="793.0" y="641.08" width="2.6999999999999997" height="2.6" fill="#dde5f2"/><rect x="793.0" y="645.60" width="2.6999999999999997" height="2.6" fill="#dde5f2"/><rect x="796.4" y="238" width="2.1" height="411" fill="#7c8aa3"/><rect x="798.5" y="224" width="3.1" height="425" fill="#575757"/><rect x="801.6" y="224" width="6.4" height="425" fill="#6b6b6b"/><rect x="808" y="230" width="3.5" height="419" fill="#555"/><rect x="811.5" y="224" width="4.4" height="425" fill="#6c6c6c"/><rect x="656" y="251.80" width="136" height="1.2" fill="#bccff0"/><rect x="656" y="265.35" width="136" height="1.2" fill="#bccff0"/><rect x="656" y="278.90" width="136" height="1.2" fill="#bccff0"/><rect x="656" y="292.45" width="136" height="1.2" fill="#bccff0"/><rect x="656" y="306.00" width="136" height="1.2" fill="#bccff0"/><rect x="656" y="319.55" width="136" height="1.2" fill="#bccff0"/><rect x="656" y="333.10" width="136" height="1.2" fill="#bccff0"/><rect x="656" y="346.65" width="136" height="1.2" fill="#bccff0"/><rect x="656" y="360.20" width="136" height="1.2" fill="#bccff0"/><rect x="656" y="373.75" width="136" height="1.2" fill="#bccff0"/><rect x="656" y="387.30" width="136" height="1.2" fill="#bccff0"/><rect x="656" y="400.85" width="136" height="1.2" fill="#bccff0"/><rect x="656" y="414.40" width="136" height="1.2" fill="#bccff0"/><rect x="656" y="427.95" width="136" height="1.2" fill="#bccff0"/><rect x="656" y="441.50" width="136" height="1.2" fill="#bccff0"/><rect x="656" y="455.05" width="136" height="1.2" fill="#bccff0"/><rect x="656" y="468.60" width="136" height="1.2" fill="#bccff0"/><rect x="656" y="482.15" width="136" height="1.2" fill="#bccff0"/><rect x="656" y="495.70" width="136" height="1.2" fill="#bccff0"/><rect x="656" y="509.25" width="136" height="1.2" fill="#bccff0"/><rect x="656" y="522.80" width="136" height="1.2" fill="#bccff0"/><rect x="656" y="536.35" width="136" height="1.2" fill="#bccff0"/><rect x="656" y="549.90" width="136" height="1.2" fill="#bccff0"/><rect x="656" y="563.45" width="136" height="1.2" fill="#bccff0"/><rect x="656" y="577.00" width="136" height="1.2" fill="#bccff0"/><rect x="656" y="590.55" width="136" height="1.2" fill="#bccff0"/><rect x="656" y="604.10" width="136" height="1.2" fill="#bccff0"/><rect x="656" y="617.65" width="136" height="1.2" fill="#bccff0"/><rect x="656" y="631.20" width="136" height="1.2" fill="#bccff0"/><rect x="656" y="644.75" width="136" height="1.2" fill="#bccff0"/><rect x="653" y="347.2" width="145" height="26.4" fill="#6e6e6e"/><path d="M659 347.2 H791 V373.6 H659 Z" fill="#7b7b7b"/><path d="M659 347.2 L668 353.4 H782 L791 347.2 Z" fill="#727272"/><path d="M659 373.6 L668 367.6 H782 L791 373.6 Z" fill="#727272"/><rect x="653" y="347.2" width="6" height="26.4" fill="#5d5d5d"/><rect x="791" y="347.2" width="7" height="26.4" fill="#5b5b5b"/><path d="M666 348.2 H783 L780 353.4 H669 Z" fill="#444"/><rect x="669.5" y="349.0" width="4" height="3.6" fill="#cfcfcf"/><rect x="675" y="349.0" width="4" height="3.6" fill="#cfcfcf"/><rect x="680.5" y="349.0" width="4" height="3.6" fill="#cfcfcf"/><rect x="713" y="349.0" width="4" height="3.6" fill="#cfcfcf"/><rect x="718.5" y="349.0" width="4" height="3.6" fill="#cfcfcf"/><rect x="724" y="349.0" width="4" height="3.6" fill="#cfcfcf"/><rect x="729.5" y="349.0" width="4" height="3.6" fill="#cfcfcf"/><rect x="735" y="349.0" width="4" height="3.6" fill="#cfcfcf"/><rect x="741" y="349.0" width="4" height="3.6" fill="#cfcfcf"/><rect x="746.5" y="349.0" width="4" height="3.6" fill="#cfcfcf"/><rect x="752" y="349.0" width="4" height="3.6" fill="#cfcfcf"/><rect x="757.5" y="349.0" width="4" height="3.6" fill="#cfcfcf"/><rect x="765" y="349.0" width="4" height="3.6" fill="#cfcfcf"/><rect x="770.5" y="349.0" width="4" height="3.6" fill="#cfcfcf"/><rect x="776" y="349.0" width="4" height="3.6" fill="#cfcfcf"/><path d="M666 368 H783 L780 373.2 H669 Z" fill="#444"/><rect x="669.5" y="368.8" width="4" height="3.6" fill="#cfcfcf"/><rect x="675" y="368.8" width="4" height="3.6" fill="#cfcfcf"/><rect x="680.5" y="368.8" width="4" height="3.6" fill="#cfcfcf"/><rect x="713" y="368.8" width="4" height="3.6" fill="#cfcfcf"/><rect x="718.5" y="368.8" width="4" height="3.6" fill="#cfcfcf"/><rect x="724" y="368.8" width="4" height="3.6" fill="#cfcfcf"/><rect x="729.5" y="368.8" width="4" height="3.6" fill="#cfcfcf"/><rect x="735" y="368.8" width="4" height="3.6" fill="#cfcfcf"/><rect x="741" y="368.8" width="4" height="3.6" fill="#cfcfcf"/><rect x="746.5" y="368.8" width="4" height="3.6" fill="#cfcfcf"/><rect x="752" y="368.8" width="4" height="3.6" fill="#cfcfcf"/><rect x="757.5" y="368.8" width="4" height="3.6" fill="#cfcfcf"/><rect x="765" y="368.8" width="4" height="3.6" fill="#cfcfcf"/><rect x="770.5" y="368.8" width="4" height="3.6" fill="#cfcfcf"/><rect x="776" y="368.8" width="4" height="3.6" fill="#cfcfcf"/><rect x="687" y="348.5" width="22" height="4.5" fill="#333"/><rect x="690" y="350" width="10" height="1" fill="#999"/><circle cx="724.9" cy="360.4" r="3.9" fill="#333" stroke="#bbb" stroke-width="0.8"/><rect x="722" y="359.8" width="6" height="1.2" fill="#9ab"/><circle cx="666.3" cy="360.8" r="2.7" fill="#3f3f3f"/><circle cx="661.8" cy="358.3" r="1.3" fill="#2a2a2a"/></svg>
<div class="t" style="left:813px;top:347.7px;font-size:9.6px;color:#111;font-weight:normal;transform:scaleX(0.8078);transform-origin:0 0;">Dell EqualLogic PS6</div>
<div style="position:absolute;left:271px;top:-20px;width:163px;height:659px;background:#f0f0f0;border:1px solid #000;border-radius:5px;box-shadow:inset 1px 1px 0 #fff,inset -1px -1px 0 #fff,3px 3px 3px rgba(0,0,0,.68)"></div>
<div style="position:absolute;left:280px;top:0;width:145px;height:6px;background:conic-gradient(#6a6a6a 25%,#fafafa 0 50%,#6a6a6a 0 75%,#fafafa 0) 0 0/3.3px 3px"></div>
<div class="t g" style="left:302px;top:14.5px;font-size:12.1px;color:#1a1a1a;font-weight:normal;">Paste</div>
<div class="t g" style="left:302px;top:40.4px;font-size:12.1px;color:#1a1a1a;font-weight:normal;">Alias</div>
<div class="t g" style="left:302px;top:67.5px;font-size:12.1px;color:#1a1a1a;font-weight:normal;">Select All</div>
<div class="t g" style="left:302px;top:100.6px;font-size:12.1px;color:#1a1a1a;font-weight:normal;">Insert Node</div>
<div class="t g" style="left:302px;top:128.0px;font-size:12.1px;color:#1a1a1a;font-weight:normal;">Insert Rack</div>
<div class="t g" style="left:302px;top:154.6px;font-size:12.1px;color:#1a1a1a;font-weight:normal;">Insert Device</div>
<div class="t g" style="left:302px;top:181.7px;font-size:12.1px;color:#1a1a1a;font-weight:normal;">Insert Palette Object</div>
<div class="t g" style="left:302px;top:208.5px;font-size:12.1px;color:#1a1a1a;font-weight:normal;">Drawing</div>
<div class="t g" style="left:302px;top:235.3px;font-size:12.1px;color:#1a1a1a;font-weight:normal;">Insert Picture</div>
<div class="t g" style="left:302px;top:261.7px;font-size:12.1px;color:#1a1a1a;font-weight:normal;">Insert Free Text [f]</div>
<div class="t g" style="left:302px;top:288.5px;font-size:12.1px;color:#1a1a1a;font-weight:normal;">Insert Rich Text</div>
<div class="t g" style="left:302px;top:321.8px;font-size:12.1px;color:#1a1a1a;font-weight:normal;">Background</div>
<div class="t g" style="left:302px;top:348.9px;font-size:12.1px;color:#9a9a9a;font-weight:normal;">Insert Map</div>
<div class="t g" style="left:302px;top:375.7px;font-size:12.1px;color:#9a9a9a;font-weight:normal;">Locate</div>
<div class="t g" style="left:302px;top:402.5px;font-size:12.1px;color:#9a9a9a;font-weight:normal;">Map Source</div>
<div class="t g" style="left:303px;top:429.5px;font-size:12.1px;color:#9a9a9a;font-weight:normal;">What's Here</div>
<div class="t g" style="left:303px;top:460.3px;font-size:12.1px;color:#9a9a9a;font-weight:normal;">Unhide all [shift-a]</div>
<div class="t g" style="left:303px;top:486.2px;font-size:12.1px;color:#1a1a1a;font-weight:normal;">Show Copied Nodes</div>
<div class="t g" style="left:302px;top:517.5px;font-size:12.1px;color:#1a1a1a;font-weight:normal;">Search</div>
<div class="t g" style="left:302px;top:550.6px;font-size:12.1px;color:#1a1a1a;font-weight:normal;">Zoom</div>
<div class="t g" style="left:302px;top:582.2px;font-size:12.1px;color:#1a1a1a;font-weight:normal;">Templates</div>
<div class="t g" style="left:303px;top:614.9px;font-size:12.1px;color:#9a9a9a;font-weight:normal;">Custom Actions</div>
<svg width="885" height="649"><path d="M422 102.3 l4.5 3.7 l-4.5 3.7 z" fill="#111"/><path d="M422 129.7 l4.5 3.7 l-4.5 3.7 z" fill="#111"/><path d="M422 156.3 l4.5 3.7 l-4.5 3.7 z" fill="#111"/><path d="M422 183.4 l4.5 3.7 l-4.5 3.7 z" fill="#111"/><path d="M422 210.2 l4.5 3.7 l-4.5 3.7 z" fill="#111"/><path d="M422 323.5 l4.5 3.7 l-4.5 3.7 z" fill="#111"/><path d="M422 404.2 l4.5 3.7 l-4.5 3.7 z" fill="#9a9a9a"/><path d="M422 552.3 l4.5 3.7 l-4.5 3.7 z" fill="#111"/><path d="M422 583.9 l4.5 3.7 l-4.5 3.7 z" fill="#111"/><path d="M422 616.6 l4.5 3.7 l-4.5 3.7 z" fill="#9a9a9a"/><rect x="277" y="91.8" width="151" height="1.3" fill="#8f8f8f"/><rect x="277" y="313.0" width="151" height="1.3" fill="#8f8f8f"/><rect x="277" y="451.8" width="151" height="1.3" fill="#8f8f8f"/><rect x="277" y="508.6" width="151" height="1.3" fill="#8f8f8f"/><rect x="277" y="541.0" width="151" height="1.3" fill="#8f8f8f"/><rect x="277" y="574.0" width="151" height="1.3" fill="#8f8f8f"/><rect x="277" y="605.7" width="151" height="1.3" fill="#8f8f8f"/></svg>
<svg width="885" height="649"><rect x="278" y="13" width="12.5" height="14" rx="1" fill="#000"/><rect x="282.2" y="17.3" width="10.8" height="12.5" rx="0.8" fill="#f0f0f0" stroke="#000" stroke-width="1.3"/><path d="M280.1 40.25 L291 40.25 L290.6 51 L286.6 47 Q283.2 50.5 285.5 56.5 Q278.8 52.5 283.4 44.2 Z" fill="#000"/><rect x="277.6" y="67.6" width="16" height="16" fill="none" stroke="#000" stroke-width="1.2" stroke-dasharray="1.2 1.5"/><circle cx="283.5" cy="72.3" r="2.3" fill="#000"/><rect x="286.5" y="73.5" width="4" height="4" fill="#000"/><path d="M281 76 L286 78.5 L281 81 Z" fill="#000"/><path d="M293.34 108.31 A7.85 7.85 0 0 1 286.18 115.72 M284.82 115.72 A7.85 7.85 0 0 1 277.66 108.31 M277.66 107.49 A7.85 7.85 0 0 1 284.82 100.08 M286.18 100.08 A7.85 7.85 0 0 1 293.34 107.49" fill="none" stroke="#000" stroke-width="1.35"/><circle cx="285.5" cy="107.9" r="4.1" fill="#000"/><rect x="276.5" y="125.2" width="18.3" height="18.1" rx="2.8" fill="#000"/><rect x="280" y="131" width="11" height="1" fill="#9a9a9a"/><rect x="280" y="132" width="11" height="1" fill="#5a5a5a"/><rect x="280" y="136" width="11" height="2" fill="#303030"/><rect x="276.5" y="129" width="3" height="0.8" fill="#fff"/><rect x="291.8" y="129" width="3" height="0.8" fill="#fff"/><rect x="279" y="128" width="13" height="3" rx="1.5" fill="#fff"/><rect x="280" y="129" width="11" height="1" fill="#000"/><rect x="276.5" y="134" width="3" height="0.8" fill="#fff"/><rect x="291.8" y="134" width="3" height="0.8" fill="#fff"/><rect x="279" y="133" width="13" height="3" rx="1.5" fill="#fff"/><rect x="280" y="134" width="11" height="1" fill="#000"/><rect x="276.5" y="139" width="3" height="0.8" fill="#fff"/><rect x="291.8" y="139" width="3" height="0.8" fill="#fff"/><rect x="279" y="138" width="13" height="3" rx="1.5" fill="#fff"/><rect x="280" y="139" width="11" height="1" fill="#000"/><rect x="277.4" y="153" width="16.5" height="5.8" rx="1" fill="none" stroke="#000" stroke-width="1.3"/><rect x="277.4" y="158.8" width="16.5" height="5.8" rx="1" fill="none" stroke="#000" stroke-width="1.3"/><circle cx="291.3" cy="156" r="0.7" fill="#000"/><circle cx="291.3" cy="161.7" r="0.7" fill="#000"/><rect x="285" y="164.6" width="1.3" height="4.5" fill="#000"/><rect x="280.3" y="169" width="10.7" height="1.5" fill="#000"/><rect x="277.3" y="180.6" width="10.4" height="16.3" rx="1.8" fill="#000"/><path d="M288.8 180.6 L291.9 183.4 L289 189 Z" fill="#000"/><path d="M292.6 186 L294.2 188.5 L289.2 193.2 Z" fill="#000"/><path d="M277 207 Q282 207 282.8 210.5 Q283.3 214 279 216.5 Q276.5 218.5 277.5 221.5 Q278.5 224 280.5 224.3" fill="none" stroke="#000" stroke-width="1.3" stroke-linecap="round"/><path d="M279.8 221.8 L290.3 211.3 L293.3 214.3 L282.8 224.8 L279.2 225.2 Z" fill="#000"/><path d="M291.3 210.3 L292.3 209.3 Q293.5 208.5 294.4 209.5 Q295.2 210.6 294.3 211.5 L293.3 212.4 Z" fill="#000"/><rect x="277.9" y="234.6" width="15.8" height="15.6" rx="2" fill="none" stroke="#000" stroke-width="1.3"/><circle cx="285.6" cy="242.4" r="3.6" fill="none" stroke="#000" stroke-width="1.3"/><rect x="289.1" y="234.6" width="1.1" height="3.3" fill="#000"/><rect x="291.2" y="234.6" width="1.1" height="3.3" fill="#000"/><rect x="279.5" y="236.3" width="1.5" height="0.8" fill="#000"/><rect x="277.3" y="261.2" width="16.6" height="16.6" rx="2.3" fill="#000"/><path d="M281.6 265.3 h8 v2.2 h-2.8 v6.7 h-2.4 v-6.7 h-2.8 z" fill="#fff"/><path d="M279.7 294.5 V288.4 Q279.7 287.2 281 287.2 H288.3 L292.3 291.4 V294.5" fill="#fff" stroke="#000" stroke-width="1.3"/><path d="M288.3 287.2 L292.3 291.4 L288.6 291.4 Z" fill="#000"/><rect x="277.1" y="294" width="17.6" height="9" rx="1.5" fill="#000"/><path d="M279.8 303 h12.2 l-0.8 2.3 h-10.6 z" fill="#888" stroke="#000" stroke-width="0.9"/><text x="285.9" y="302.2" font-family="Liberation Sans" font-weight="bold" font-size="8.2" fill="#fff" text-anchor="middle" textLength="14.5" lengthAdjust="spacingAndGlyphs">RTF</text><rect x="278" y="321" width="15" height="15" rx="1.5" fill="#000"/><path d="M280.2 333 L283 329.2 L284.8 331 L288 327.3 L291 333 Z" fill="#fff"/><circle cx="285.5" cy="355.3" r="7.8" fill="none" stroke="#8a8a8a" stroke-width="1.3" stroke-dasharray="4.4 1.7"/><circle cx="285.5" cy="355.3" r="7.8" fill="none" stroke="#8a8a8a" stroke-width="1.1"/><path d="M281.6 351.4 L286.3 354.5 L289.4 359.2 L284.7 356.1 Z" fill="#8a8a8a"/><circle cx="278.8" cy="348.3" r="1.2" fill="#8a8a8a"/><path d="M285.9 374.3 a4.3 4.3 0 0 1 4.3 4.3 c0 2.5 -4.3 7 -4.3 7 c0 0 -4.3 -4.5 -4.3 -7 a4.3 4.3 0 0 1 4.3 -4.3 z" fill="#8a8a8a"/><circle cx="285.9" cy="378.6" r="1.6" fill="#f0f0f0"/><path d="M279 384 L283.5 384 L285.9 386.5 L288.3 384 L292.5 384 L294.2 390.8 L277.5 390.8 Z" fill="#8a8a8a"/><path d="M280 387.5 L292 386.3 M284 390.8 L289 387" stroke="#f0f0f0" stroke-width="0.8"/><path d="M285.5 400.7 L294 405 L285.5 409.3 L277 405 Z" fill="#8a8a8a"/><path d="M277.5 408.7 L285.5 412.7 L293.5 408.7" fill="none" stroke="#8a8a8a" stroke-width="1.6"/><path d="M277.5 412.5 L285.5 416.6 L293.5 412.5" fill="none" stroke="#8a8a8a" stroke-width="1.6"/><path d="M280 520.8 L284.3 520.8 L285.2 522.3 L286.1 520.8 L290.4 520.8 L294.1 526.8 L276.5 526.8 Z" fill="#000"/><circle cx="280.3" cy="527" r="3.9" fill="#000"/><circle cx="290.2" cy="527" r="3.9" fill="#000"/><rect x="284" y="523" width="2.5" height="5" fill="#000"/><circle cx="280.4" cy="527" r="2.4" fill="#f0f0f0"/><circle cx="290.1" cy="527" r="2.4" fill="#f0f0f0"/><rect x="280.1" y="518.6" width="4" height="2.4" rx="1.1" fill="#000"/><rect x="286.3" y="518.6" width="4" height="2.4" rx="1.1" fill="#000"/><circle cx="287.3" cy="555.6" r="5.7" fill="none" stroke="#000" stroke-width="2.5"/><line x1="282.8" y1="560.2" x2="278.5" y2="564.6" stroke="#000" stroke-width="3" stroke-linecap="round"/><path d="M284.6 554.6 a3 3 0 0 1 1.9 -2" stroke="#000" stroke-width="0.8" fill="none"/><path d="M278.2 585.8 V583.6 Q278.2 582.1 279.7 582.1 H291.9 Q293.4 582.1 293.4 583.6 V585.8 Z" fill="#000"/><rect x="278.2" y="586.9" width="15.1" height="10.1" rx="1" fill="#000"/><rect x="280.7" y="588.6" width="10.9" height="2.2" rx="0.9" fill="none" stroke="#fff" stroke-width="0.95"/><rect x="280.7" y="592.5" width="4.2" height="2.9" rx="0.7" fill="none" stroke="#fff" stroke-width="0.95"/><rect x="287" y="592.5" width="4.6" height="2.9" rx="0.7" fill="none" stroke="#fff" stroke-width="0.95"/><rect x="286.6" y="584" width="0.9" height="0.7" fill="#ccc"/><rect x="288.2" y="584" width="2.6" height="0.7" fill="#ccc"/></svg>
<div style="position:absolute;left:430px;top:148px;width:189px;height:252px;background:#f0f0f0;border:1px solid #000;border-radius:5px;box-shadow:inset 1px 1px 0 #fff,inset -1px -1px 0 #fff,3px 3px 3px rgba(0,0,0,.68)"></div>
<div style="position:absolute;left:433px;top:184px;width:183.5px;height:25.6px;background:#1e1e1e;border-radius:2px 5px 5px 5px"></div>
<div class="t g" style="left:460.8px;top:157.1px;font-size:12.1px;color:#1a1a1a;font-weight:normal;">Add Device</div>
<div class="t g" style="left:461.7px;top:189.7px;font-size:12.1px;color:#fff;font-weight:normal;transform:scaleX(0.9698);transform-origin:0 0;-webkit-text-stroke:0.2px #fff;">Core_Devices</div>
<div class="t g" style="left:462px;top:215.7px;font-size:12.1px;color:#1a1a1a;font-weight:normal;">2920(J9727A)_Stackx2</div>
<div class="t g" style="left:462px;top:241.4px;font-size:12.1px;color:#1a1a1a;font-weight:normal;">Blank Panel 1U</div>
<div class="t g" style="left:462px;top:266.3px;font-size:12.1px;color:#1a1a1a;font-weight:normal;">Cisco WS-C2960-24-S</div>
<div class="t g" style="left:462px;top:292.5px;font-size:12.1px;color:#1a1a1a;font-weight:normal;">Dell EqualLogic PS6110S</div>
<div class="t g" style="left:462px;top:318.6px;font-size:12.1px;color:#1a1a1a;font-weight:normal;">Juniper ACX1000</div>
<div class="t g" style="left:462px;top:344.4px;font-size:12.1px;color:#1a1a1a;font-weight:normal;">SpliceBox_D</div>
<div class="t g" style="left:462px;top:375.2px;font-size:12.1px;color:#1a1a1a;font-weight:normal;">Create new Type</div>
<svg width="885" height="649"><rect x="436" y="180.8" width="178" height="1.3" fill="#8f8f8f"/><rect x="436" y="366.9" width="178" height="1.3" fill="#8f8f8f"/><path d="M607 191.5 l4.3 3.7 l-4.3 3.7 z" fill="#fff"/></svg>
<div style="position:absolute;left:433px;top:210px;width:22px;height:21px;background:linear-gradient(90deg,#4a5560 0,#8aa3b5 1px,#dfe5e8 2px,#e7ebed 10px,#c9cdd0 11px,#8e8e8e 11.5px,#a3a3a3 13px,#7f7f7f 14.5px,#a8a89a 15.5px,#9e9e9e 17px,#7a7a7a 18.5px,#a0a0a0 20px,#868686 22px)"></div>
<div style="position:absolute;left:433px;top:210px;width:11px;height:21px;background:linear-gradient(rgba(0,0,0,0) 0,rgba(0,0,0,0) 45%,rgba(0,0,0,.12) 50%,rgba(0,0,0,0) 55%);"></div>
<div style="position:absolute;left:433px;top:236.5px;width:22px;height:20.5px;background:linear-gradient(#e3e9ee,#d4d8db 60%,#c3c5c6)"></div>
<div style="position:absolute;left:434px;top:261px;width:20px;height:21.8px;background:linear-gradient(90deg,rgba(255,255,255,0) 0,rgba(255,255,255,.08) 30%,rgba(0,0,0,.08) 55%,rgba(255,255,255,.1) 80%,rgba(0,0,0,.15) 100%),linear-gradient(#3f6878,#4a6a68 60%,#587260)"></div>
<div style="position:absolute;left:433.1px;top:287px;width:21.9px;height:21.8px;background:linear-gradient(90deg,#6a6a6a,#808080 20%,#727272 35%,#878787 50%,#6e6e6e 62%,#838383 75%,#6a6a6a 100%)"></div>
<div style="position:absolute;left:433.6px;top:313px;width:20.4px;height:21.7px;background:linear-gradient(90deg,#707070,#9a9a96 10%,#5a5a5a 25%,#5b6f85 33%,#6a6a6a 40%,#8d8d8d 55%,#5d5d5d 70%,#888 85%,#5e5e5e 100%)"></div>
<svg width="885" height="649"><path d="M434.5 340.5 h3 l1 -1 h2 l1 1 h4 l1 -1 h2 l1 1 h3 v5 l1 1 v5 l-1 1 v4 h-3 l-1 1 h-2 l-1 -1 h-4 l-1 1 h-2 l-1 -1 h-3 v-4 l-1 -1 v-5 l1 -1 z" fill="#505056"/></svg>
<svg width="885" height="649"><rect x="435.3" y="156" width="16.5" height="6" rx="1" fill="none" stroke="#000" stroke-width="1.3"/><rect x="435.3" y="162" width="16.5" height="6" rx="1" fill="none" stroke="#000" stroke-width="1.3"/><circle cx="449.5" cy="158.8" r="0.7" fill="#000"/><circle cx="449.5" cy="164.6" r="0.7" fill="#000"/><rect x="443" y="168" width="1.3" height="4.5" fill="#000"/><rect x="438.3" y="172.4" width="10.7" height="1.5" fill="#000"/><rect x="433.6" y="184.4" width="21.2" height="20.6" fill="#222" stroke="#d6d6d6" stroke-width="0.8"/><defs><linearGradient id="sky" x1="0" y1="0" x2="0" y2="1"><stop offset="0" stop-color="#e6eefa"/><stop offset="0.45" stop-color="#d3e1f4"/><stop offset="1" stop-color="#c4d6ee"/></linearGradient></defs><path d="M435.9 186 H447.3 L453.9 192.6 V203.6 H435.9 Z" fill="url(#sky)"/><path d="M447.3 186 L453.9 192.6 H449 Q447.3 192.6 447.3 191 Z" fill="#e8e8e8"/><path d="M435.9 203.6 V199.5 Q440.5 195.8 446 198.5 L448 203.6 Z" fill="#52b043"/><path d="M442.6 188.3 L442.9 204.3 L446.4 200.9 L449 206.4 L451.3 205.3 L448.7 200 L453.4 199.6 Z" fill="#fff" stroke="#111122" stroke-width="0.95" stroke-linejoin="round"/></svg>
<div style="position:absolute;left:615.9px;top:183.1px;width:135px;height:31.3px;background:#f0f0f0;border:1px solid #000;border-radius:6px;box-shadow:inset 1px 1px 0 #fff,inset -1px -1px 0 #fff,3px 3px 3px rgba(0,0,0,.68)"></div>
<div style="position:absolute;left:619.3px;top:186px;width:21px;height:21.5px;background:linear-gradient(90deg,#9aa2aa,#d9dde0 15%,#e2e5e7 45%,#c8cdd1 50%,#e0e3e5 55%,#d0d4d7 100%)"></div>
<svg width="885" height="649"><rect x="622" y="191" width="3" height="5" fill="#3b4d66"/><circle cx="629" cy="190" r=".6" fill="#666"/><circle cx="629" cy="194" r=".6" fill="#666"/><circle cx="633" cy="190" r=".6" fill="#c9a040"/><circle cx="636" cy="190" r=".6" fill="#666"/><circle cx="633" cy="195" r=".6" fill="#c9a040"/><circle cx="636" cy="195" r=".6" fill="#666"/><circle cx="629" cy="199" r=".6" fill="#666"/><circle cx="633" cy="201" r=".6" fill="#c9a040"/></svg>
<div class="t g" style="left:647.3px;top:191.9px;font-size:12.1px;color:#1a1a1a;font-weight:normal;">PowerPanel</div></body></html>
